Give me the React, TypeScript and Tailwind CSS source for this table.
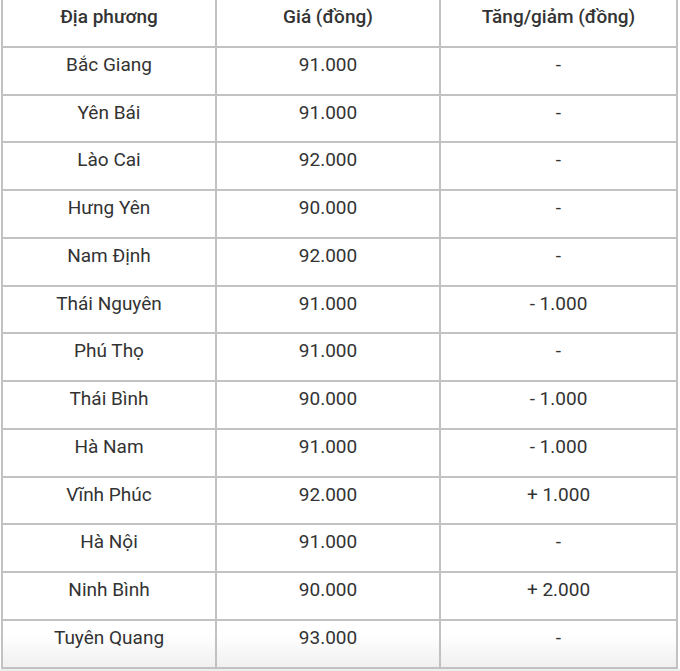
const rows: [string, string, string][] = [
  ["Bắc Giang", "91.000", "-"],
  ["Yên Bái", "91.000", "-"],
  ["Lào Cai", "92.000", "-"],
  ["Hưng Yên", "90.000", "-"],
  ["Nam Định", "92.000", "-"],
  ["Thái Nguyên", "91.000", "- 1.000"],
  ["Phú Thọ", "91.000", "-"],
  ["Thái Bình", "90.000", "- 1.000"],
  ["Hà Nam", "91.000", "- 1.000"],
  ["Vĩnh Phúc", "92.000", "+ 1.000"],
  ["Hà Nội", "91.000", "-"],
  ["Ninh Bình", "90.000", "+ 2.000"],
  ["Tuyên Quang", "93.000", "-"],
];

const cell =
  "h-[47.77px] border-r-2 border-b-2 border-[#c2c2c2] pt-[3px] text-center leading-[28px]";

const App = () => {
  return (
    <div className="w-[680px] h-[671px] bg-white overflow-hidden font-['Roboto',sans-serif] text-[19px] text-[#333]">
      <div className="ml-px w-[677px] border-l-2 border-[#c2c2c2] grid grid-cols-[214px_224px_237px]">
        <div className={`${cell} font-medium`}>Địa phương</div>
        <div className={`${cell} font-medium`}>Giá (đồng)</div>
        <div className={`${cell} font-medium`}>Tăng/giảm (đồng)</div>
        {rows.map((r, i) => {
          const last = i === rows.length - 1;
          const bg = last ? "bg-linear-to-b from-white from-30% to-[#f0f0f0]" : "bg-white";
          return (
            <div key={r[0]} className="contents">
              <div className={`${cell} ${bg}`}>{r[0]}</div>
              <div className={`${cell} ${bg}`}>{r[1]}</div>
              <div className={`${cell} ${bg}`}>{r[2]}</div>
            </div>
          );
        })}
      </div>
      <div className="h-[4px] bg-[#eeeeee]" />
    </div>
  );
};

export default App;
